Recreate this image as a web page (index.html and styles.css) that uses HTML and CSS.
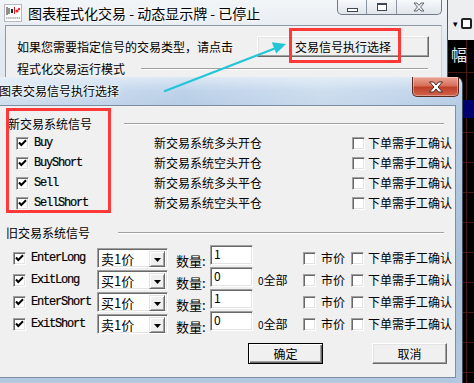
FILE: index.html
```html
<!DOCTYPE html>
<html lang="zh-CN">
<head>
  <meta charset="UTF-8">
  <meta name="viewport" content="width=device-width, initial-scale=1.0">
  <title>图表交易信号执行选择</title>
  <link rel="stylesheet" href="styles.css">
</head>
<body>
  <div class="desktop">

    <!-- chart application behind the windows -->
    <div class="app-behind">
      <div class="app-toolbar">
        <span class="tb-arrow">&#9662;</span>
        <span class="tb-icon"></span>
      </div>
      <div class="app-chart">
        <span class="chart-label">幅</span>
        <div class="chart-blue"></div>
      </div>
    </div>

    <!-- main window -->
    <div class="win-main">
      <div class="main-title">
        <svg class="app-icon" width="18" height="18" viewBox="0 0 18 18">
          <rect x="0.5" y="0.5" width="17" height="17" fill="#fff" stroke="#b8bcc2"/>
          <line x1="3" y1="3" x2="3" y2="11" stroke="#222" stroke-width="1"/>
          <line x1="5" y1="4" x2="5" y2="10" stroke="#222" stroke-width="1"/>
          <rect x="7" y="5" width="2" height="4" fill="#222"/>
          <line x1="10.5" y1="3" x2="10.5" y2="10" stroke="#d22" stroke-width="1"/>
          <circle cx="13" cy="7" r="1.6" fill="#e22"/>
          <circle cx="15" cy="5" r="1.2" fill="#e22"/>
          <line x1="2" y1="14" x2="16" y2="14" stroke="#777" stroke-width="1.2" stroke-dasharray="1.5 0.6"/>
        </svg>
        <span class="main-title-text">图表程式化交易 - 动态显示牌 - 已停止</span>
        <div class="caption-btns">
          <span class="cap cap-min"><span class="ico-min"></span></span>
          <span class="cap cap-max"><span class="ico-max"></span></span>
          <span class="cap cap-close">
            <svg width="12" height="10" viewBox="0 0 12 10">
              <path d="M1 1h3l2 2.4L8 1h3L7.6 5 11 9H8L6 6.6 4 9H1l3.4-4z" fill="#f4f6f8" stroke="#4b5560" stroke-width="0.9"/>
            </svg>
          </span>
        </div>
      </div>
      <div class="main-panel">
        <div class="hint-row">
          <span class="hint-text">如果您需要指定信号的交易类型，请点击</span>
          <span class="btn btn-wide">交易信号执行选择</span>
        </div>
        <div class="mode-row">
          <span>程式化交易运行模式</span>
          <span class="etched"></span>
        </div>
      </div>
      <div class="mark mark-btn"></div>
    </div>

    <!-- dialog -->
    <div class="dialog">
      <div class="dlg-title">
        <span class="dlg-title-text">图表交易信号执行选择</span>
        <span class="dlg-close">
          <svg width="16" height="12" viewBox="0 0 16 12">
            <path d="M1.5 1h4l2.5 3 2.5-3h4l-4.5 5 4.5 5h-4L8 8 5.5 11h-4L6 6z" fill="#fff" stroke="#4a2a25" stroke-width="1"/>
          </svg>
        </span>
      </div>

      <div class="dlg-content">
        <div class="group-head head-new">
          <span class="group-label">新交易系统信号</span>
          <span class="etched"></span>
        </div>
        <div class="sig-list">
          <div class="sig-row">
            <span class="cb on"></span><span class="mono">Buy</span>
            <span>新交易系统多头开仓</span>
            <span class="cb"></span><span>下单需手工确认</span>
          </div>
          <div class="sig-row">
            <span class="cb on"></span><span class="mono">BuyShort</span>
            <span>新交易系统空头开仓</span>
            <span class="cb"></span><span>下单需手工确认</span>
          </div>
          <div class="sig-row">
            <span class="cb on"></span><span class="mono">Sell</span>
            <span>新交易系统多头平仓</span>
            <span class="cb"></span><span>下单需手工确认</span>
          </div>
          <div class="sig-row">
            <span class="cb on"></span><span class="mono">SellShort</span>
            <span>新交易系统空头平仓</span>
            <span class="cb"></span><span>下单需手工确认</span>
          </div>
        </div>

        <div class="group-head head-old">
          <span class="group-label">旧交易系统信号</span>
          <span class="etched"></span>
        </div>
        <div class="old-list">
          <div class="old-row">
            <span class="cb on"></span><span class="mono">EnterLong</span>
            <span class="combo"><span class="combo-text">卖1价</span><span class="combo-btn"></span></span>
            <span class="qty-label">数量:</span>
            <span class="field">1</span>
            <span></span>
            <span class="cb"></span><span>市价</span>
            <span class="cb"></span><span>下单需手工确认</span>
          </div>
          <div class="old-row">
            <span class="cb on"></span><span class="mono">ExitLong</span>
            <span class="combo"><span class="combo-text">买1价</span><span class="combo-btn"></span></span>
            <span class="qty-label">数量:</span>
            <span class="field">0</span>
            <span class="all-note"><small>0</small>全部</span>
            <span class="cb"></span><span>市价</span>
            <span class="cb"></span><span>下单需手工确认</span>
          </div>
          <div class="old-row">
            <span class="cb on"></span><span class="mono">EnterShort</span>
            <span class="combo"><span class="combo-text">买1价</span><span class="combo-btn"></span></span>
            <span class="qty-label">数量:</span>
            <span class="field">1</span>
            <span></span>
            <span class="cb"></span><span>市价</span>
            <span class="cb"></span><span>下单需手工确认</span>
          </div>
          <div class="old-row">
            <span class="cb on"></span><span class="mono">ExitShort</span>
            <span class="combo"><span class="combo-text">卖1价</span><span class="combo-btn"></span></span>
            <span class="qty-label">数量:</span>
            <span class="field">0</span>
            <span class="all-note"><small>0</small>全部</span>
            <span class="cb"></span><span>市价</span>
            <span class="cb"></span><span>下单需手工确认</span>
          </div>
        </div>

        <div class="dlg-buttons">
          <span class="btn btn-default">确定</span>
          <span class="btn">取消</span>
        </div>

        <div class="mark mark-new"></div>
      </div>
    </div>

    <svg class="arrow" width="474" height="383" viewBox="0 0 474 383">
      <line x1="165" y1="91" x2="276" y2="48" stroke="#22c6d6" stroke-width="2.4" stroke-linecap="round"/>
      <polygon points="286,44 276.2,53.4 271.8,42.2" fill="#22c6d6"/>
    </svg>
  </div>
</body>
</html>
```

FILE: styles.css
```css
* {
  box-sizing: border-box;
}

body {
  margin: 0;
  padding: 0;
  font-family: "Noto Sans CJK SC", "Liberation Sans", sans-serif;
  font-size: 12px;
  color: #000;
  background: #000;
}

.desktop {
  position: relative;
  width: 474px;
  height: 383px;
  overflow: hidden;
}

/* ---------- app behind ---------- */

.app-behind {
  position: absolute;
  left: 448px;
  top: 0;
  width: 26px;
  height: 383px;
  display: flex;
  flex-direction: column;
}

.app-toolbar {
  height: 40px;
  flex: none;
  background: #eceef0;
  display: flex;
  align-items: center;
  gap: 3px;
  padding: 6px 0 0 5px;
}

.tb-arrow {
  font-size: 9px;
  line-height: 1;
}

.tb-icon {
  width: 11px;
  height: 11px;
  border: 2px solid #222;
  border-radius: 2px;
  background: #fff;
}

.app-chart {
  flex: 1;
  background-color: #000;
  background-image:
    repeating-linear-gradient(to bottom, transparent 0, transparent 29px, #4a1810 29px, #4a1810 30px),
    linear-gradient(to right, #4a1810 1px, transparent 1px);
  background-position: 0 3px, 18px 0;
  background-size: 100% 100%, 100% 100%;
  background-repeat: repeat, no-repeat;
  padding-top: 6px;
}

.chart-label {
  display: block;
  height: 16px;
  color: #e8e8e8;
  font-size: 16px;
  line-height: 16px;
  padding-left: 3px;
}

.chart-blue {
  margin: 38px 0 0 15px;
  height: 18px;
  background: #00006e;
}

/* ---------- main window ---------- */

.win-main {
  position: absolute;
  left: 0;
  top: 0;
  width: 448px;
  height: 383px;
  background: linear-gradient(to bottom, #f2f5f8 0, #e3e9f0 40px, #d7e0ea 100%);
  border-right: 1px solid #4d5866;
}

.main-title {
  height: 25px;
  display: flex;
  align-items: center;
  padding-left: 4px;
}

.app-icon {
  flex: none;
  margin-top: 1px;
}

.main-title-text {
  margin-left: 6px;
  font-size: 14px;
  line-height: 16px;
  white-space: nowrap;
  text-shadow: 0 0 5px #fff, 0 0 3px #fff;
}

.caption-btns {
  margin-left: auto;
  margin-right: 5px;
  align-self: flex-start;
  display: flex;
  flex: none;
  height: 15px;
  border: 1px solid #6f7a86;
  border-top: none;
  border-radius: 0 0 5px 5px;
  background: linear-gradient(to bottom, #f7f9fb, #dfe5eb);
  overflow: hidden;
}

.cap {
  display: flex;
  align-items: center;
  justify-content: center;
  height: 100%;
}

.cap-min {
  width: 29px;
  border-right: 1px solid #8b96a2;
}

.cap-max {
  width: 30px;
  border-right: 1px solid #8b96a2;
}

.cap-close {
  width: 44px;
}

.ico-min {
  width: 11px;
  height: 4px;
  margin-top: 5px;
  border: 1px solid #3f4852;
  background: #fff;
}

.ico-max {
  width: 10px;
  height: 8px;
  border: 1px solid #3f4852;
  border-top-width: 2px;
  background: #fff;
}

.main-panel {
  margin-left: 5px;
  width: 437px;
  height: 120px;
  background: #f0f0f0;
  border: 1px solid #8d99a6;
  border-right-color: #c9d0d8;
  padding: 10px 12px 0 11px;
}

.hint-row {
  height: 21px;
  display: flex;
  align-items: center;
  line-height: 14px;
}

.hint-text {
  flex: none;
  width: 240px;
  white-space: nowrap;
}

.mode-row {
  margin-top: 4px;
  height: 16px;
  display: flex;
  align-items: center;
  line-height: 14px;
}

.mode-row .etched {
  margin-left: 16px;
  margin-right: 1px;
}

.etched {
  flex: 1;
  height: 2px;
  border-top: 1px solid #a0a0a0;
  border-bottom: 1px solid #fff;
}

/* red annotation boxes */
.mark {
  position: absolute;
  border: 3px solid #ff3838;
}

.mark-btn {
  left: 289px;
  top: 28px;
  width: 112px;
  height: 35px;
}

.mark-new {
  left: 6px;
  top: 2px;
  width: 105px;
  height: 105px;
}

/* ---------- dialog ---------- */

.dialog {
  position: absolute;
  left: 0;
  top: 77px;
  width: 463px;
  height: 306px;
  display: flex;
  flex-direction: column;
  border-radius: 0 7px 0 0;
  border-right: 1px solid #3e4d5e;
  background: linear-gradient(to bottom, #dce8f4 0, #bed3ea 14px, #b7cde5 28px, #a9c0da 200px, #b3c9e2 100%);
}

.dlg-title {
  height: 28px;
  display: flex;
  flex: none;
  background: linear-gradient(to right, rgba(255,255,255,0.35), rgba(255,255,255,0) 40%, rgba(255,255,255,0.25) 70%, rgba(255,255,255,0));
}

.dlg-title-text {
  align-self: center;
  line-height: 16px;
  margin-left: -1px;
  text-shadow: 0 0 6px #fff, 0 0 3px #fff, 0 0 2px #fff;
}

.dlg-close {
  margin-left: auto;
  margin-right: 3px;
  width: 47px;
  height: 20px;
  display: flex;
  align-items: center;
  justify-content: center;
  border: 1px solid #5a2a22;
  border-top: none;
  border-radius: 0 0 5px 5px;
  background: linear-gradient(to bottom, #e9a796 0, #d8705a 45%, #c0402a 55%, #d0644c 100%);
  box-shadow: inset 0 0 0 1px rgba(255,255,255,0.35);
}

.dlg-content {
  position: relative;
  width: 456px;
  height: 273px;
  flex: none;
  background: #f0f0f0;
  border: 1px solid #7c8ea4;
  border-left: none;
  padding-top: 9px;
}

.group-head {
  height: 17px;
  display: flex;
  align-items: center;
  padding-left: 8px;
  padding-right: 11px;
  line-height: 14px;
}

.head-new .group-label {
  width: 116px;
}

.head-old {
  margin-top: 11px;
  padding-left: 6px;
}

.head-old .group-label {
  width: 112px;
}

.sig-list {
  margin-top: 1px;
}

.sig-row {
  height: 20px;
  display: grid;
  grid-template-columns: 18px 120px 198px 16px auto;
  align-items: center;
  padding-left: 16px;
  line-height: 14px;
}

.old-list {
  margin-top: 4px;
}

.old-row {
  height: 22px;
  display: grid;
  grid-template-columns: 18px 66px 79px 34px 48px 45px 18px 30px 17px auto;
  align-items: center;
  padding-left: 13px;
  line-height: 14px;
}

.mono {
  font-family: "Liberation Mono", monospace;
  font-size: 12px;
  letter-spacing: -1.2px;
  color: #000;
  -webkit-text-stroke: 0.2px #000;
}

/* classic sunken checkbox */
.cb {
  display: block;
  width: 13px;
  height: 13px;
  background: #fff;
  border: 1px solid;
  border-color: #a0a0a0 #fff #fff #a0a0a0;
  box-shadow: inset 1px 1px 0 #696969, inset -1px -1px 0 #e3e3e3;
}

.cb.on {
  background: #fff url("data:image/svg+xml,%3Csvg xmlns='http://www.w3.org/2000/svg' width='11' height='11' viewBox='0 0 11 11'%3E%3Cpath d='M2 4.5 L4.3 7 L9 2.3' fill='none' stroke='%23000' stroke-width='2'/%3E%3C/svg%3E") no-repeat 0 0;
}

.combo {
  display: flex;
  width: 71px;
  height: 20px;
  background: #fff;
  border: 1px solid;
  border-color: #a0a0a0 #fff #fff #a0a0a0;
  box-shadow: inset 1px 1px 0 #696969, inset -1px -1px 0 #e3e3e3;
  padding: 2px;
}

.combo-text {
  flex: 1;
  padding-left: 1px;
  font-size: 13px;
  line-height: 16px;
}

.combo-btn {
  width: 16px;
  height: 16px;
  background: #f0f0f0 url("data:image/svg+xml,%3Csvg xmlns='http://www.w3.org/2000/svg' width='7' height='4'%3E%3Cpath d='M0 0h7L3.5 4z' fill='%23000'/%3E%3C/svg%3E") no-repeat 4px 6px;
  border: 1px solid;
  border-color: #e3e3e3 #696969 #696969 #e3e3e3;
  box-shadow: inset 1px 1px 0 #fff, inset -1px -1px 0 #a0a0a0;
}

.qty-label {
  font-size: 13px;
  margin-top: 6px;
}

.field {
  width: 43px;
  height: 20px;
  margin-bottom: 6px;
  background: #fff;
  border: 1px solid;
  border-color: #a0a0a0 #fff #fff #a0a0a0;
  box-shadow: inset 1px 1px 0 #696969, inset -1px -1px 0 #e3e3e3;
  padding: 1px 0 0 3px;
  font-size: 12px;
  line-height: 13px;
}

.all-note {
  font-size: 12px;
}

.all-note small {
  font-size: 10px;
}

.dlg-buttons {
  margin-top: 10px;
  display: flex;
  justify-content: flex-end;
  gap: 49px;
  padding-right: 8px;
}

.btn {
  display: flex;
  flex: none;
  align-items: center;
  justify-content: center;
  width: 75px;
  height: 21px;
  background: #f0f0f0;
  border: 1px solid;
  border-color: #fff #696969 #696969 #fff;
  box-shadow: inset -1px -1px 0 #a0a0a0, inset 1px 1px 0 #e3e3e3;
  line-height: 14px;
  white-space: nowrap;
}

.btn-wide {
  width: 172px;
}

.btn-default {
  border: 1px solid #000;
  box-shadow: inset 1px 1px 0 #fff, inset -1px -1px 0 #696969, inset -2px -2px 0 #a0a0a0;
}

.arrow {
  position: absolute;
  left: 0;
  top: 0;
  pointer-events: none;
}
```
